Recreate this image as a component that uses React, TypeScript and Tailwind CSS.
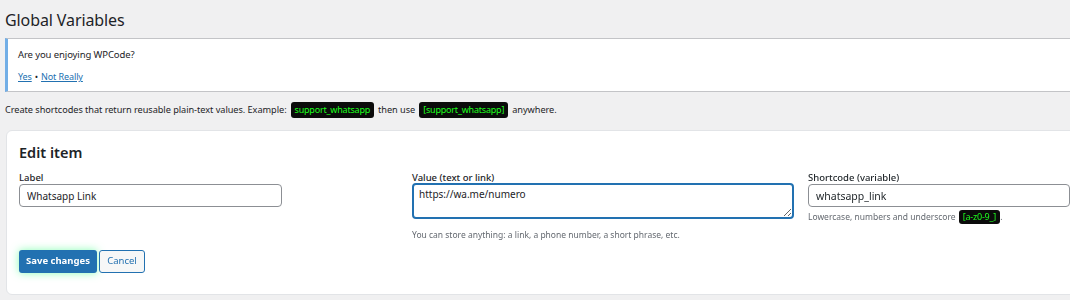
import React, { useState } from 'react';

const font = { fontFamily: '"Noto Sans", "Open Sans", Arial, sans-serif' };

const Code: React.FC<{ children: React.ReactNode; small?: boolean }> = ({ children, small }) => (
  <span
    className={
      'inline-flex items-center rounded-[3px] bg-[#0b0b0b] text-[#1eff1e] tracking-[-0.2px] ' +
      (small ? 'h-[14px] px-[4px] text-[9px]' : 'h-[16px] px-[4px] text-[9px]')
    }
  >
    {children}
  </span>
);

const App: React.FC = () => {
  const [label, setLabel] = useState('Whatsapp Link');
  const [value, setValue] = useState('https://wa.me/numero');
  const [shortcode, setShortcode] = useState('whatsapp_link');

  return (
    <div className="w-[1070px] h-[300px] overflow-hidden bg-[#f0f0f1] text-[#1d2327]" style={font}>
      <div className="w-[1100px] pl-[5px]">
        <h1 className="pt-[9px] h-[38px] text-[16px] leading-[22px] font-normal tracking-[-0.1px]">Global Variables</h1>

        <div className="h-[54px] bg-white border-y border-[#c3c4c7] border-l-[3px] border-l-[#72aee6] pl-[10px] pt-[8px]">
          <p className="text-[9.5px] leading-[16px] tracking-[-0.1px]">Are you enjoying WPCode?</p>
          <p className="mt-[6px] text-[9px] leading-[16px] tracking-[-0.1px]">
            <a href="#" className="text-[#2271b1] underline">Yes</a>
            <span className="mx-[3px]">•</span>
            <a href="#" className="text-[#2271b1] underline">Not Really</a>
          </p>
        </div>

        <p className="mt-[10px] flex items-center gap-[4px] text-[9.2px] leading-[16px] tracking-[-0.05px]">
          <span>Create shortcodes that return reusable plain-text values. Example:</span>
          <Code>support_whatsapp</Code>
          <span>then use</span>
          <Code>[support_whatsapp]</Code>
          <span>anywhere.</span>
        </p>

        <div className="mt-[12px] ml-[1px] h-[165px] rounded-[6px] border border-[#e2e4e7] bg-white px-[12px] pt-[11px]">
          <h2 className="text-[14.5px] leading-[20px] font-semibold">Edit item</h2>

          <div className="mt-[10px] grid grid-cols-[379px_382px_1fr] gap-x-[14px]">
            <div>
              <label className="block text-[9.5px] leading-[12px] font-medium">Label</label>
              <input
                value={label}
                onChange={(e) => setLabel(e.target.value)}
                className="block h-[23px] w-[263px] rounded-[4px] border border-[#8c8f94] px-[7px] text-[10px] outline-none"
              />
            </div>
            <div>
              <label className="block text-[9.5px] leading-[12px] font-medium">Value (text or link)</label>
              <textarea
                value={value}
                onChange={(e) => setValue(e.target.value)}
                autoFocus
                className="block -mt-[1px] h-[36px] w-[382px] rounded-[4px] border-2 border-[#2271b1] px-[5px] py-[2px] text-[10px] leading-[14px] outline-none"
              />
              <p className="mt-[10px] text-[8.5px] leading-[12px] text-[#646970]">
                You can store anything: a link, a phone number, a short phrase, etc.
              </p>
            </div>
            <div>
              <label className="block text-[9.5px] leading-[12px] font-medium">Shortcode (variable)</label>
              <input
                value={shortcode}
                onChange={(e) => setShortcode(e.target.value)}
                className="block h-[23px] w-[262px] rounded-[4px] border border-[#8c8f94] px-[7px] text-[10.5px] outline-none"
              />
              <p className="mt-[3px] flex items-center gap-[3px] text-[8.5px] leading-[14px] text-[#646970]">
                <span>Lowercase, numbers and underscore</span>
                <Code small>[a-z0-9_]</Code>
                <span className="-ml-[3px]">.</span>
              </p>
            </div>
          </div>

          <div className="mt-[9px] flex gap-[2px]">
            <button
              type="button"
              className="h-[23px] w-[78px] rounded-[3px] bg-[#2271b1] text-[9.5px] font-bold text-white shadow-[0_0_8px_rgba(40,255,120,0.55)]"
            >
              Save changes
            </button>
            <button
              type="button"
              className="h-[23px] w-[46px] rounded-[3px] border border-[#2271b1] bg-[#f6f7f7] text-[9.5px] text-[#2271b1]"
            >
              Cancel
            </button>
          </div>
        </div>
      </div>
    </div>
  );
};

export default App;
